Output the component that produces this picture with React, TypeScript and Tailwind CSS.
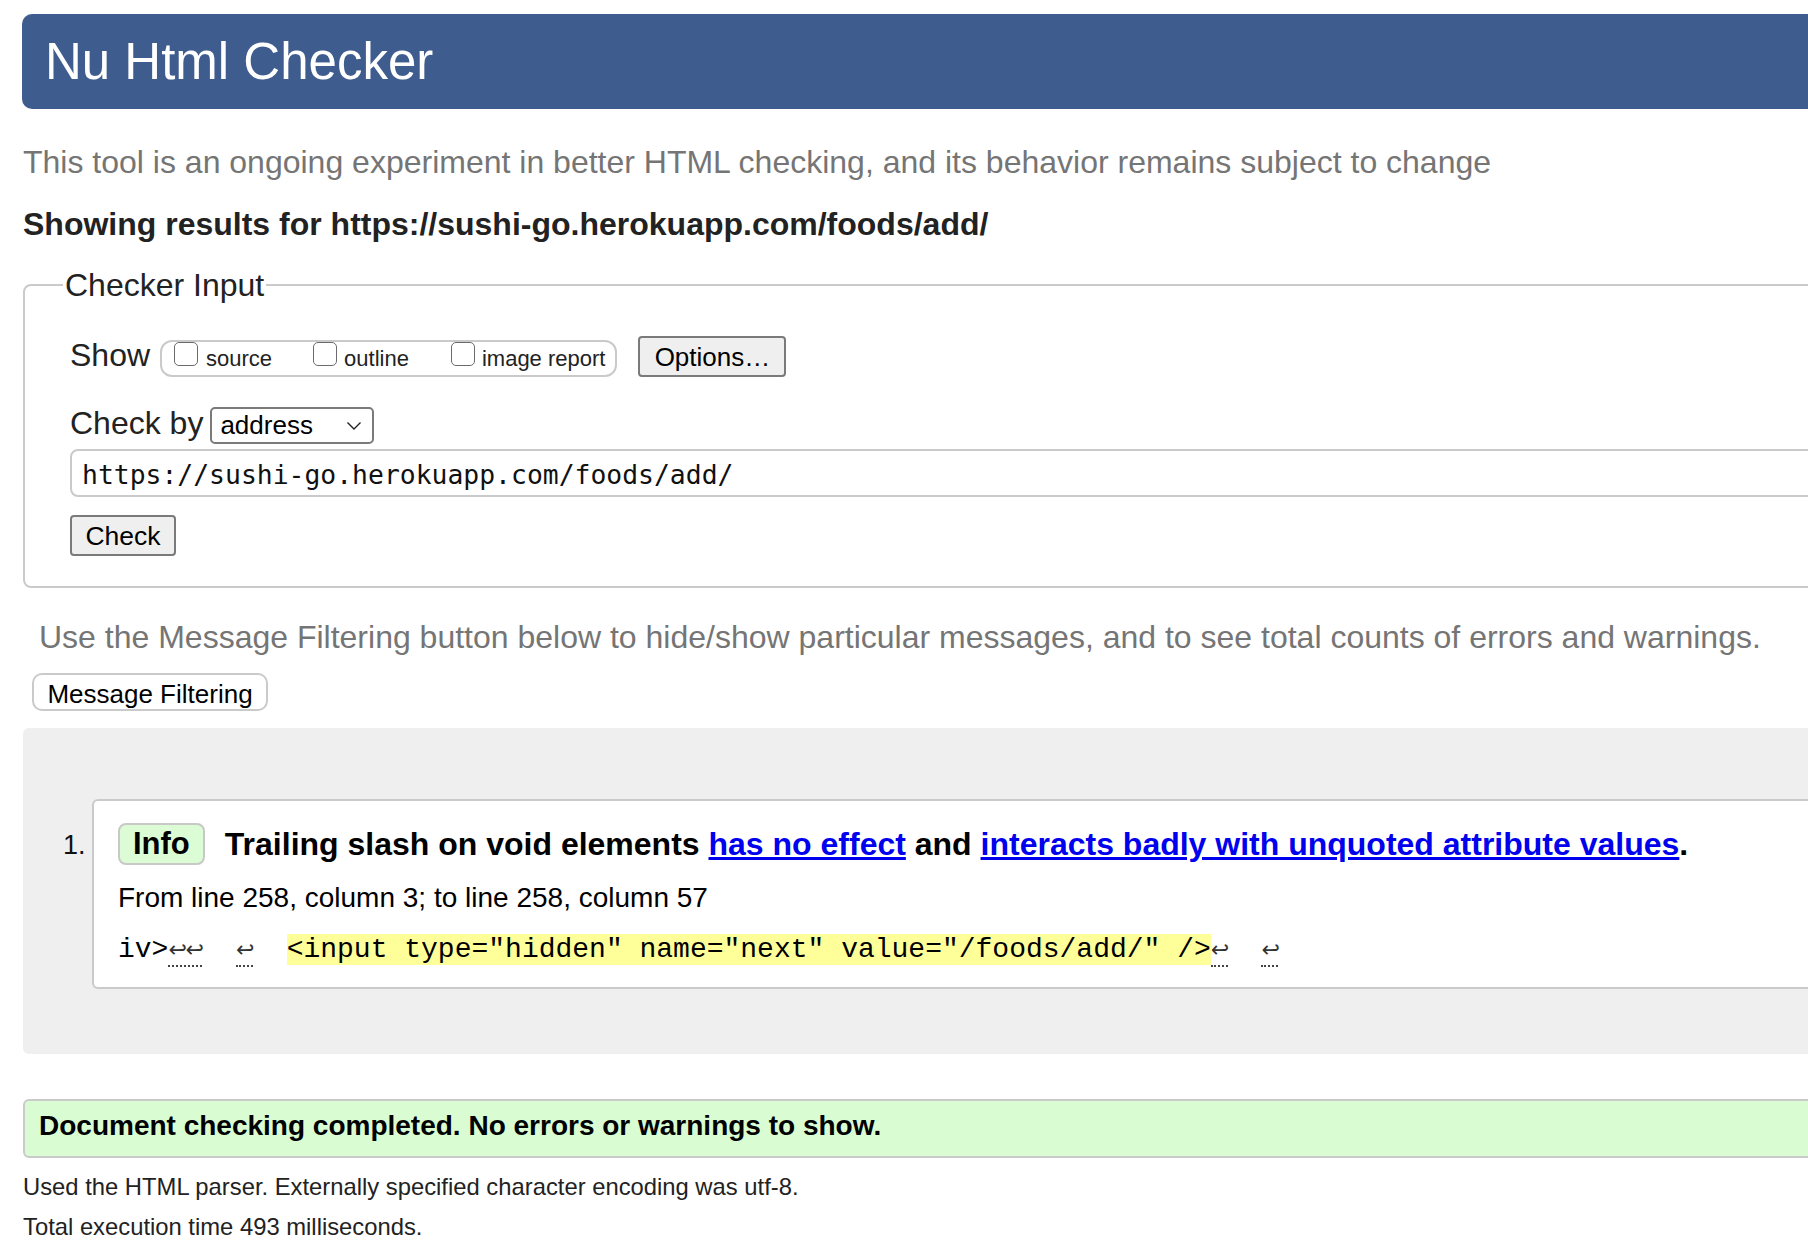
import React from "react";

const sans = "font-['Liberation_Sans',Arial,sans-serif]";

function Checkbox() {
  return (
    <span className="inline-block w-[24px] h-[24px] rounded-[5px] border-[1.5px] border-[#6b6b6b] bg-white align-baseline" />
  );
}

function Ret() {
  return (
    <span className="inline-block w-[17px] text-center text-[22px] font-['DejaVu_Sans',sans-serif] text-[#333]">
      ↩
    </span>
  );
}

function Dotted({ children }: { children: React.ReactNode }) {
  return <span className="border-b-2 border-dotted border-[#444]">{children}</span>;
}

export default function App() {
  return (
    <div className={`w-[1808px] h-[1256px] overflow-hidden bg-white text-[#222] ${sans}`}>
      <div className="w-[1900px] pl-[22px] pt-[14px]">
        {/* title bar */}
        <header className="h-[95px] rounded-[10px] bg-[#3f5c8e] flex items-center pl-[23px]">
          <h1 className="text-[51px] leading-none text-white">Nu Html Checker</h1>
        </header>

        <p className="mt-[35px] pl-[1px] text-[32px] leading-[36px] text-[#757575]">
          This tool is an ongoing experiment in better HTML checking, and its behavior remains subject to change
        </p>
        <p className="mt-[26px] pl-[1px] text-[32px] leading-[36px] font-bold text-[#222]">
          Showing results for https://sushi-go.herokuapp.com/foods/add/
        </p>

        {/* checker input */}
        <fieldset className="mt-[25px] ml-[1px] border-2 border-[#cacaca] rounded-[8px] pl-[45px] pt-[33px] pb-[30px]">
          <legend className="-ml-[7px] px-[2px] text-[32px] leading-[36px] text-[#222]">Checker Input</legend>

          <div className="flex items-baseline">
            <span className="text-[32px] leading-[36px]">Show</span>
            <div className="ml-[10px] h-[37px] border-2 border-[#cacaca] rounded-[12px] pl-[12px] pr-[10px] text-[22px] leading-[26px] whitespace-nowrap">
              <label>
                <Checkbox />
                <span className="ml-[8px]">source</span>
              </label>
              <label className="ml-[41px]">
                <Checkbox />
                <span className="ml-[7px]">outline</span>
              </label>
              <label className="ml-[42px]">
                <Checkbox />
                <span className="ml-[7px]">image report</span>
              </label>
            </div>
            <button className="ml-[21px] h-[41px] w-[148px] bg-[#efefef] border-2 border-[#7a7a7a] rounded-[4px] text-[26px] text-black">
              Options…
            </button>
          </div>

          <div className="mt-[28px] flex items-baseline">
            <span className="text-[32px] leading-[36px]">Check by</span>
            <div className="ml-[7px] h-[37px] w-[164px] border-2 border-[#7a7a7a] rounded-[5px] pl-[8px] pr-[8px] flex items-center justify-between text-[26px] text-black">
              <span>address</span>
              <svg width="16" height="10" viewBox="0 0 16 10" className="mr-[2px]">
                <polyline points="1.5,1.5 8,8 14.5,1.5" fill="none" stroke="#222" strokeWidth="1.4" />
              </svg>
            </div>
          </div>

          <div className="mt-[5px] h-[48px] border-2 border-[#cacaca] rounded-[8px] pl-[10px] pt-[4px] flex items-center font-['DejaVu_Sans_Mono',monospace] text-[26.4px] text-[#111]">
            https://sushi-go.herokuapp.com/foods/add/
          </div>

          <button className="mt-[18px] h-[41px] w-[106px] bg-[#efefef] border-2 border-[#7a7a7a] rounded-[4px] text-[26.5px] text-black">
            Check
          </button>
        </fieldset>

        <p className="mt-[31px] pl-[17px] text-[32px] leading-[36px] text-[#757575]">
          Use the Message Filtering button below to hide/show particular messages, and to see total counts of errors and warnings.
        </p>
        <div className="mt-[18px] ml-[10px]">
          <button className="h-[38px] w-[236px] bg-white border-2 border-[#cacaca] rounded-[10px] text-[26px] text-black">
            Message Filtering
          </button>
        </div>

        {/* results */}
        <div className="mt-[17px] ml-[1px] bg-[#efefef] rounded-[6px] pt-[71px] pb-[65px] pl-[40px] flex items-baseline">
          <span className="w-[29px] text-[27px] text-[#111]">1.</span>
          <div className="flex-1 bg-white border-2 border-[#cacaca] rounded-[6px] pt-[22px] pb-[21px] pl-[24px] text-black">
            <div className="flex items-center">
              <span className="h-[42px] px-[13px] rounded-[8px] border-2 border-[#c8c8c8] bg-[#dcfcd5] text-[31px] font-bold flex items-center">
                Info
              </span>
              <span className="ml-[20px] text-[32px] leading-[36px] font-bold">
                Trailing slash on void elements{" "}
                <a href="#" className="text-[#0000ee] underline">has no effect</a> and{" "}
                <a href="#" className="text-[#0000ee] underline">interacts badly with unquoted attribute values</a>.
              </span>
            </div>
            <p className="mt-[16px] text-[28px] leading-[34px]">
              From line 258, column 3; to line 258, column 57
            </p>
            <div className="mt-[19px] font-['Liberation_Mono','Courier_New',monospace] text-[28px] leading-[32px] whitespace-pre">
              iv&gt;
              <Dotted>
                <Ret />
                <Ret />
              </Dotted>
              {"  "}
              <Dotted>
                <Ret />
              </Dotted>
              {"  "}
              <span className="bg-[#ffff99]">&lt;input type="hidden" name="next" value="/foods/add/" /&gt;</span>
              <Dotted>
                <Ret />
              </Dotted>
              {"  "}
              <Dotted>
                <Ret />
              </Dotted>
            </div>
          </div>
        </div>

        <div className="mt-[45px] ml-[1px] h-[59px] border-2 border-[#cacaca] rounded-[6px] bg-[#d9fcd2] pt-[11px] pl-[14px] text-[28px] leading-[28px] font-bold text-black">
          Document checking completed. No errors or warnings to show.
        </div>
        <p className="mt-[15px] pl-[1px] text-[23.8px] leading-[28px] text-[#222]">
          Used the HTML parser. Externally specified character encoding was utf-8.
        </p>
        <p className="mt-[12px] pl-[1px] text-[23.8px] leading-[28px] text-[#222]">
          Total execution time 493 milliseconds.
        </p>
      </div>
    </div>
  );
}
